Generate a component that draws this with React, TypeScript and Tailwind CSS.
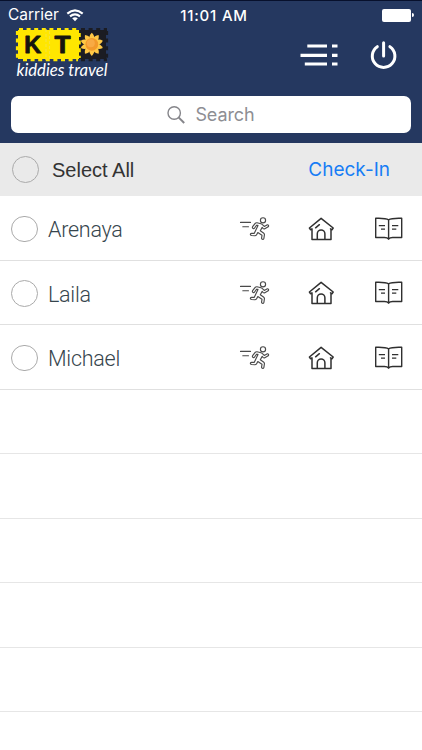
import React from "react";

const names = ["Arenaya", "Laila", "Michael"];
const blanks = [0, 1, 2, 3, 4, 5];

function WifiIcon() {
  return (
    <svg className="ml-[7px] h-[13px] w-[18px]" viewBox="0 0 18 13" fill="none" stroke="white" strokeWidth="2.1">
      <path d="M1.3 4.6Q9-2 16.7 4.6M4 7.4Q9 3.2 14 7.4" />
      <path d="M6.2 9.3Q9 7 11.8 9.3L9 12.3Z" fill="white" stroke="none" />
    </svg>
  );
}

function Logo() {
  return (
    <svg className="h-[56px] w-[98px]" viewBox="14 25 98 56">
      <path d="M18 30H79V59H18Z" fill="#ffe600" />
      <path d="M19 29.4H78M23 59.8H78" stroke="#ffe600" strokeWidth="3" strokeDasharray="4 3.6" />
      <path d="M17.4 31V58" stroke="#ffe600" strokeWidth="3" strokeDasharray="4 3.6" />
      <path d="M79 30H106V59H79Z" fill="#1b1c23" />
      <path d="M81 29.4H107M81 59.8H107M106.6 31V59" stroke="#1b1c23" strokeWidth="3" strokeDasharray="4 3.6" />
      <path d="M79 33V58" stroke="#ffe600" strokeWidth="3.5" strokeDasharray="4 3.6" />
      <path d="M46 29V60M49.5 31V60" stroke="#f6e43a" strokeWidth="1.1" strokeDasharray="3 2" />
      <g fill="#16150f" stroke="#16150f" strokeWidth="0.9" strokeLinejoin="round" fontFamily="'Liberation Sans', Arial, sans-serif" fontWeight="700" fontSize="24.5">
        <text x="24.3" y="53" textLength="17" lengthAdjust="spacingAndGlyphs">K</text>
        <text x="54.5" y="53" textLength="16" lengthAdjust="spacingAndGlyphs">T</text>
      </g>
      <g transform="translate(91.8 44.3)">
        {[0, 36, 72, 108, 144, 180, 216, 252, 288, 324].map((a) => (
          <path key={a} d="M-2.3-5Q-3.2-8.6 0-11.6Q3.2-8.6 2.3-5Z" fill="#ffc845" transform={`rotate(${a})`} />
        ))}
        <circle r="6.4" fill="#f29a2b" />
        <circle cx="-1" cy="-1" r="4" fill="#f8aa44" />
      </g>
      <text x="16.5" y="76.2" fill="white" fontFamily="Lato, 'Open Sans', sans-serif" fontStyle="italic" fontWeight="400" fontSize="17.5" textLength="91" lengthAdjust="spacingAndGlyphs">kiddies travel</text>
    </svg>
  );
}

function MenuIcon() {
  return (
    <svg className="h-[24px] w-[38px]" viewBox="300 43 38 24" stroke="white" strokeWidth="3.2">
      <path d="M307.3 46H327M300.5 55.3H327M304.8 64H327M332 46H337.5M332 55.3H337.5M332 64H337.5" />
    </svg>
  );
}

function PowerIcon() {
  return (
    <svg className="ml-[32px] h-[30px] w-[28px]" viewBox="370 40 28 30" fill="none" stroke="white" strokeWidth="3" strokeLinecap="round">
      <path d="M383.6 42.7V56M377.3 46.7A11.3 11.3 0 1 0 389.9 46.7" />
    </svg>
  );
}

function RunnerIcon() {
  return (
    <svg className="h-[26px] w-[32px]" viewBox="239 216 32 26" fill="none" stroke="#4a4a4a" strokeWidth="1.15" strokeLinecap="round" strokeLinejoin="round">
      <path d="M240.5 222.4H250.5M242.8 226.7H248.5" />
      <circle cx="263" cy="220.3" r="2.6" />
      <path d="M253.2 228.6Q251.8 227.8 252.8 226.4L255 223.6Q255.7 222.7 257 222.8L261 223.7Q262.3 224.1 263 225.2L264.2 226.4L267 224.9Q268.4 224.5 268.6 225.7Q268.7 226.5 267.8 227L264.8 228.7Q263.8 229.1 263 228.3L262.2 227.4L260.3 230.7L263.5 233Q264.6 233.8 264.4 235L263.9 238.3Q263.5 239.7 262.3 239.3Q261.4 239 261.6 237.9L262 235.3L257.8 232.6L256.6 234.7Q256 235.7 254.8 235.7L251.6 235.5Q250.2 235.2 250.4 234.1Q250.6 233.3 251.7 233.3L254.3 233.3L256.2 229.3L258 225.4L256.5 225.2L254.6 228Q254 229 253.2 228.6Z" />
    </svg>
  );
}

function HouseIcon() {
  return (
    <svg className="ml-[36px] h-[26px] w-[28px]" viewBox="307 216 28 26" fill="none" stroke="#303030" strokeWidth="1.5" strokeLinejoin="round" strokeLinecap="round">
      <path d="M312 229.2V239.6H331V229.2M312 228.8L310.6 229.7L309.4 228L321.1 218.3L333.2 228L332 229.7L330.5 228.8M317.3 239.3V233.8A3.8 3.8 0 0 1 324.9 233.8V239.3M315.6 227.8L319.4 224.7" />
    </svg>
  );
}

function BookIcon() {
  return (
    <svg className="ml-[39px] h-[26px] w-[30px]" viewBox="374 216 30 26" fill="none" stroke="#303030" strokeWidth="1.4" strokeLinejoin="round">
      <path d="M388.6 219.8C385.5 217.8 381 218.2 375.7 218.2V237.5H384.5Q387.4 237.5 388.6 239.2Q389.8 237.5 392.7 237.5H401.7V218.2C396.4 218.2 391.7 217.8 388.6 219.8ZM388.6 219.8V239M378.8 225.6H385M381 229.1H385M392 225.6H398.3M392 229.1H396.3" />
    </svg>
  );
}

export default function App() {
  return (
    <div className="h-[750px] w-full overflow-hidden bg-white">
      <header className="flex h-[143px] flex-col border-t border-[#07102c] bg-[#253860]">
        <div className="grid h-[24px] shrink-0 grid-cols-3 items-center pt-[4px] font-['Inter',sans-serif] text-white">
          <div className="flex items-center pl-[8px] text-[15.5px] leading-none">
            <span>Carrier</span>
            <WifiIcon />
          </div>
          <div className="pl-[6px] text-center text-[15px] leading-none font-medium tracking-[0.8px] whitespace-nowrap">11:01 AM</div>
          <div className="flex items-center justify-end pr-[8px]">
            <div className="h-[13px] w-[29px] rounded-[2px] bg-white" />
            <div className="ml-[1px] h-[4px] w-[2px] rounded-r-full bg-white" />
          </div>
        </div>
        <div className="flex h-[56px] shrink-0 items-center pl-[14px]">
          <Logo />
          <div className="ml-[188px] flex items-center pt-[4px]">
            <MenuIcon />
            <PowerIcon />
          </div>
        </div>
        <div className="mx-[11px] mt-[15px] flex h-[37px] shrink-0 items-center justify-center rounded-[7px] bg-white">
          <svg className="h-[18px] w-[18px]" viewBox="0 0 18 18" fill="none" stroke="#85858a" strokeWidth="1.4">
            <circle cx="7.2" cy="7" r="6.2" />
            <path d="M11.6 11.4L17.2 17" strokeWidth="2" />
          </svg>
          <span className="ml-[10px] font-['Inter',sans-serif] text-[18px] leading-none tracking-[-0.1px] text-[#8e8e93]">Search</span>
        </div>
      </header>
      <div className="flex h-[53px] items-center bg-[#eaeaea] pr-[32px] pl-[12px]">
        <div className="size-[27px] rounded-full border border-[#aaaaaa]" />
        <span className="ml-[13px] font-['Liberation_Sans',Arial,sans-serif] text-[20px] leading-none text-[#333333]">Select All</span>
        <span className="ml-auto font-['Inter',sans-serif] text-[19px] leading-none text-[#177df5]">Check-In</span>
      </div>
      <main>
        {names.map((name) => (
          <div key={name} className="flex h-[64.5px] items-center border-b border-[#e0e0e0] pt-[2px] pl-[11px]">
            <div className="size-[26.5px] rounded-full border border-[#aaaaaa]" />
            <span className="ml-[10.5px] w-[190.5px] pt-[2px] font-['Roboto',sans-serif] text-[21.5px] leading-none font-light tracking-[-0.25px] text-[#36454d]">{name}</span>
            <RunnerIcon />
            <HouseIcon />
            <BookIcon />
          </div>
        ))}
        {blanks.map((row) => (
          <div key={row} className="h-[64.5px] border-b border-[#e6e6e6]" />
        ))}
      </main>
    </div>
  );
}
